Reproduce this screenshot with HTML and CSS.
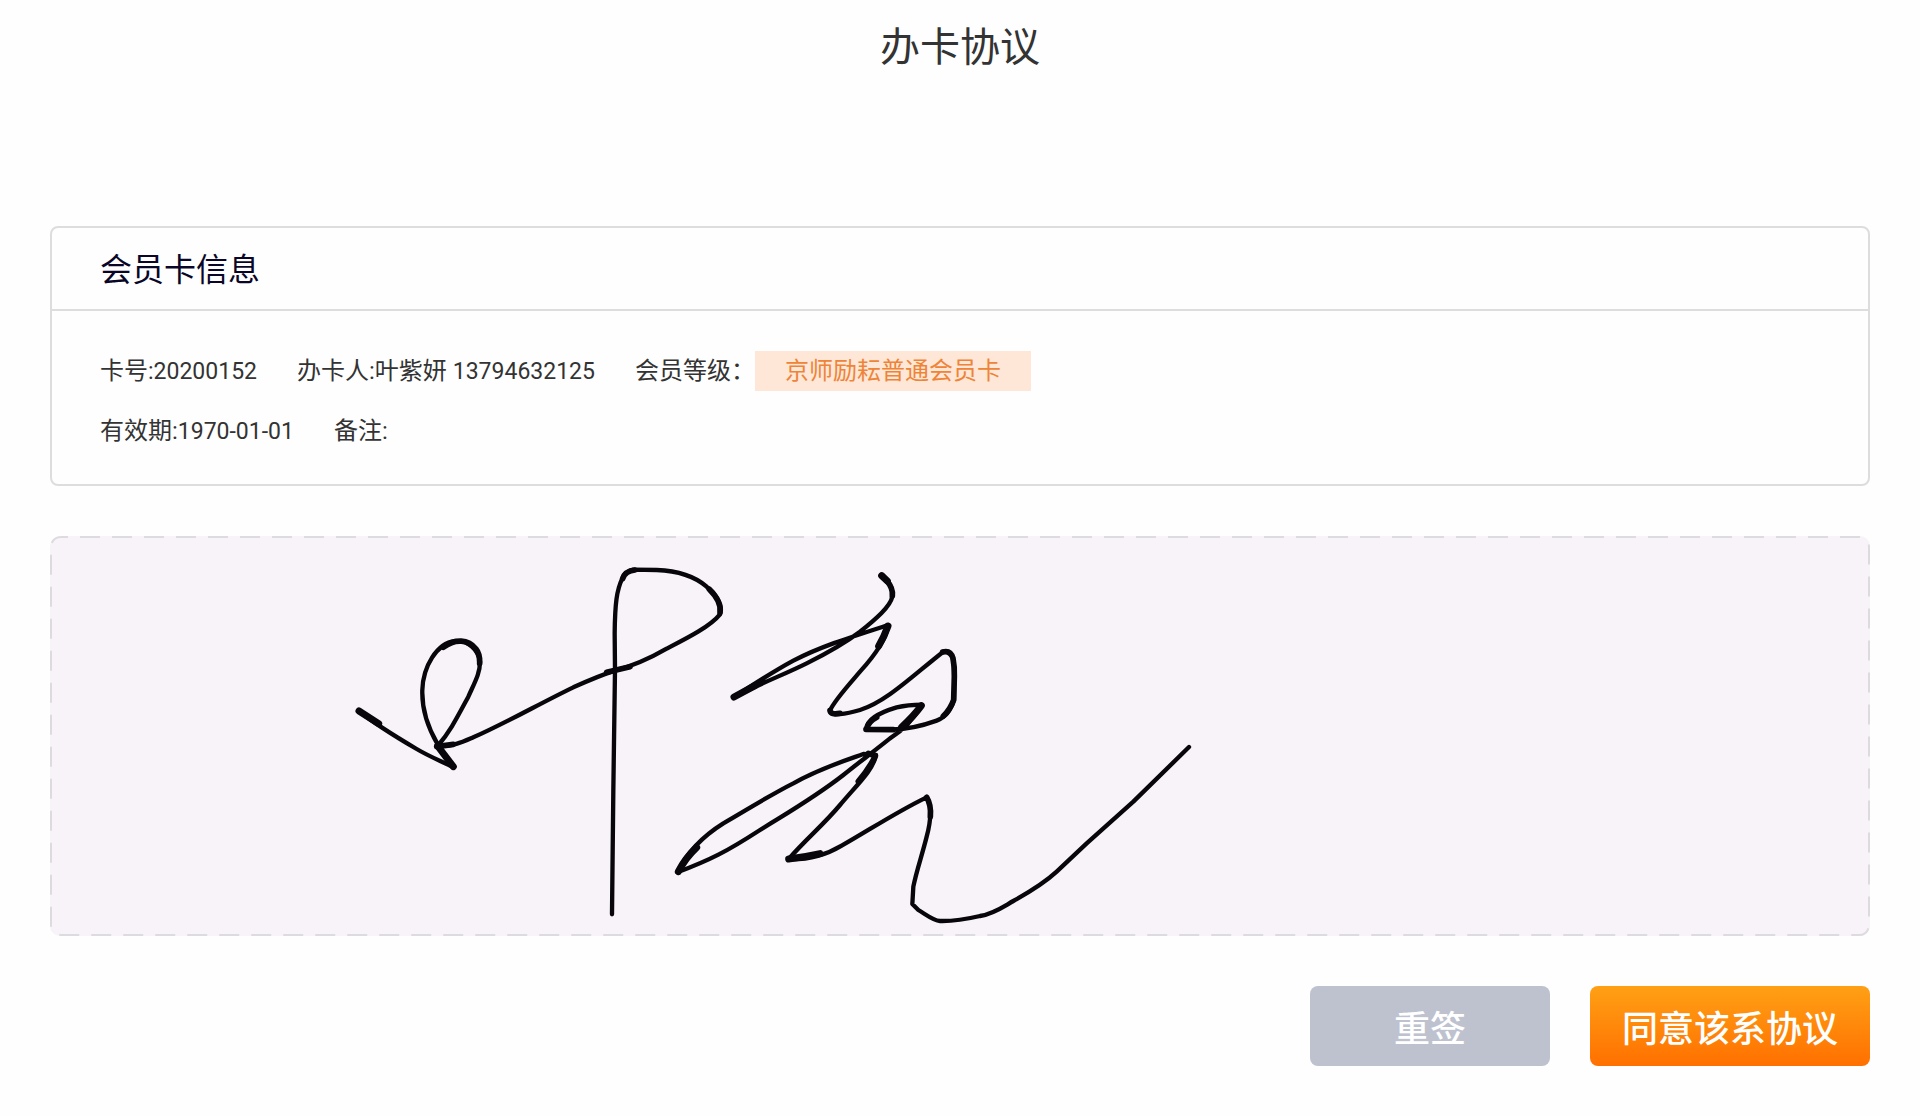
FILE: index.html
```html
<!DOCTYPE html>
<html lang="zh-CN">
<head>
    <meta charset="UTF-8">
    <meta name="viewport" content="width=device-width, initial-scale=1.0">
    <title>办卡协议</title>
    <link rel="stylesheet" href="styles.css">
</head>
<body>
    <h1 class="page-title">办卡协议</h1>

    <main class="content">
        <!-- 会员卡信息 -->
        <section class="card">
            <h2 class="card-title">会员卡信息</h2>
            <div class="card-body">
                <div class="info-row">
                    <span>卡号<span class="num">:20200152</span></span>
                    <span>办卡人:叶紫妍 <span class="num">13794632125</span></span>
                    <span class="level">会员等级：<em class="tag">京师励耘普通会员卡</em></span>
                </div>
                <div class="info-row">
                    <span>有效期:<span class="num">1970-01-01</span></span>
                    <span>备注:</span>
                </div>
            </div>
        </section>

        <!-- 签名区域 -->
        <section class="sign-pad">
            <svg class="sign-frame" aria-hidden="true">
                <rect x="1" y="1" rx="10" />
            </svg>
            <svg class="signature" viewBox="0 0 2580 1140" role="img" aria-label="签名">
                <g>
                    <path d="M57 483 C90 510 150 550 230 597 C265 618 300 632 341 652 C330 635 310 612 293 583 C262 530 245 480 247 420 C249 350 290 280 345 273 C385 270 415 300 420 335 C420 370 405 395 385 440 C350 505 330 545 293 588 C340 590 370 575 400 562 C500 518 600 460 700 412 C760 385 800 370 825 362 C880 347 930 325 980 296 C1040 265 1110 230 1140 193 C1150 160 1120 125 1100 110 C1060 75 1000 62 950 60 L880 59 C860 65 850 75 847 85 C830 120 825 160 824 250 L825 360 L820 720 L816 1093" />
                    <path class="bold" d="M57 483 L116 521" />
                    <path class="bold" d="M293 588 L340 650" />
                    <path class="mid" d="M290 590 L340 583 M800 367 L870 350" />
                    <path class="mid" d="M1108 118 C1130 140 1144 165 1140 188" />
                    <path class="mid" d="M848 86 C853 70 865 62 885 60 M310 292 C345 265 385 268 408 297 Q420 312 419 340" />
                </g>
                <g transform="translate(960 0)">
                    <path d="M665 77 C690 95 700 115 697 140 C690 170 650 205 600 245 C560 275 500 310 440 340 C370 375 300 400 222 442 C270 410 330 370 400 332 C480 290 570 262 685 225 C680 260 650 310 600 365 C570 400 520 455 510 482 C510 500 560 492 600 480 C680 455 760 375 850 305 C880 300 882 330 883 380 L882 450 C870 490 850 505 830 512 C780 530 740 538 700 538 L618 538 C622 510 650 490 710 472 C740 465 760 464 785 464 C760 510 730 540 690 565 C640 605 600 635 550 675 C460 745 380 790 300 840 C200 905 150 930 52 967 C70 930 110 870 190 820 C260 780 330 735 400 700 C480 655 560 630 610 612 L648 615 C640 660 590 705 540 765 C490 825 440 865 385 928 C440 930 490 920 545 887 C620 845 710 785 800 742 C820 775 808 830 800 860 C785 920 770 960 760 1010 L757 1062 L775 1080 C800 1095 820 1112 840 1113 C880 1114 930 1105 960 1098 C1000 1092 1030 1070 1060 1053 C1105 1028 1150 1002 1190 965 L1280 880 L1420 755 L1587 591" />
                    <path class="bold" d="M665 77 L682 93" />
                    <path class="mid" d="M680 92 Q700 115 697 138" />
                    <path class="bold" d="M222 441 L285 407" />
                    <path class="bold" d="M684 228 Q672 262 656 288" />
                    <path class="mid" d="M510 482 Q512 495 540 490 M848 306 Q872 300 879 325 Q884 350 883 380 L881 450 Q870 480 850 498" />
                    <path class="bold" d="M784 467 Q760 500 725 531" />
                    <path class="mid" d="M620 537 Q624 516 650 502 M618 538 L700 539" />
                    <path class="bold" d="M55 965 Q75 925 110 892" />
                    <path class="bold" d="M386 927 Q430 922 480 911" />
                    <path class="mid" d="M625 610 L646 618 Q628 655 595 694" />
                    <path class="mid" d="M800 742 Q814 765 811 800" />
                </g>
            </svg>
        </section>

        <div class="actions">
            <button type="button" class="btn btn-reset">重签</button>
            <button type="button" class="btn btn-agree">同意该系协议</button>
        </div>
    </main>
</body>
</html>
```
FILE: styles.css
```css
* {
    box-sizing: border-box;
}
body {
    margin: 0;
    background: #fefefe;
    color: #333;
    font-family: Roboto, "Noto Sans CJK SC", sans-serif;
    font-size: 24px;
}
.page-title {
    margin: 0;
    padding-top: 18px;
    font-size: 40px;
    line-height: 60px;
    font-weight: 400;
    text-align: center;
}
.content {
    padding: 148px 50px 50px;
}
.card {
    border: 2px solid #ddd;
    border-radius: 8px;
}
.card-title {
    margin: 0;
    padding: 3px 48px 0;
    border-bottom: 2px solid #ddd;
    color: #0a0628;
    font-size: 32px;
    line-height: 78px;
    font-weight: 400;
}
.card-body {
    display: flex;
    flex-direction: column;
    gap: 20px;
    padding: 40px 48px 33px;
}
.info-row {
    display: flex;
    flex-wrap: wrap;
    gap: 0 40px;
    line-height: 40px;
}
.num {
    font-size: 23px;
    line-height: 1;
}
.level {
    display: flex;
}
.tag {
    padding: 0 30px;
    background: #fee7d7;
    color: #ee8437;
    font-style: normal;
}
.sign-pad {
    position: relative;
    height: 400px;
    margin-top: 50px;
    padding: 14px 0 0 290px;
    border-radius: 10px;
    background: #f7f3f8;
}
.sign-frame {
    position: absolute;
    top: 0;
    left: 0;
    width: 100%;
    height: 100%;
}
.sign-frame rect {
    width: calc(100% - 2px);
    height: calc(100% - 2px);
    fill: none;
    stroke: #dedbe0;
    stroke-width: 2;
    stroke-dasharray: 20 12;
    stroke-dashoffset: 13;
}
.signature {
    display: block;
    width: 860px;
    max-width: 100%;
    height: 380px;
}
.signature path {
    fill: none;
    stroke: #08060a;
    stroke-width: 13;
    stroke-linecap: round;
    stroke-linejoin: round;
}
.signature .mid {
    stroke-width: 17;
}
.signature .bold {
    stroke-width: 21;
}
.actions {
    display: flex;
    justify-content: flex-end;
    gap: 40px;
    margin-top: 50px;
}
.btn {
    height: 80px;
    padding: 0;
    border: none;
    border-radius: 8px;
    color: #fff;
    font-family: inherit;
    font-size: 36px;
    font-weight: 500;
    cursor: pointer;
}
.btn-reset {
    width: 240px;
    background: #bec2cf;
}
.btn-agree {
    width: 280px;
    background: linear-gradient(to bottom, #ffa015, #ff7000);
}
```
